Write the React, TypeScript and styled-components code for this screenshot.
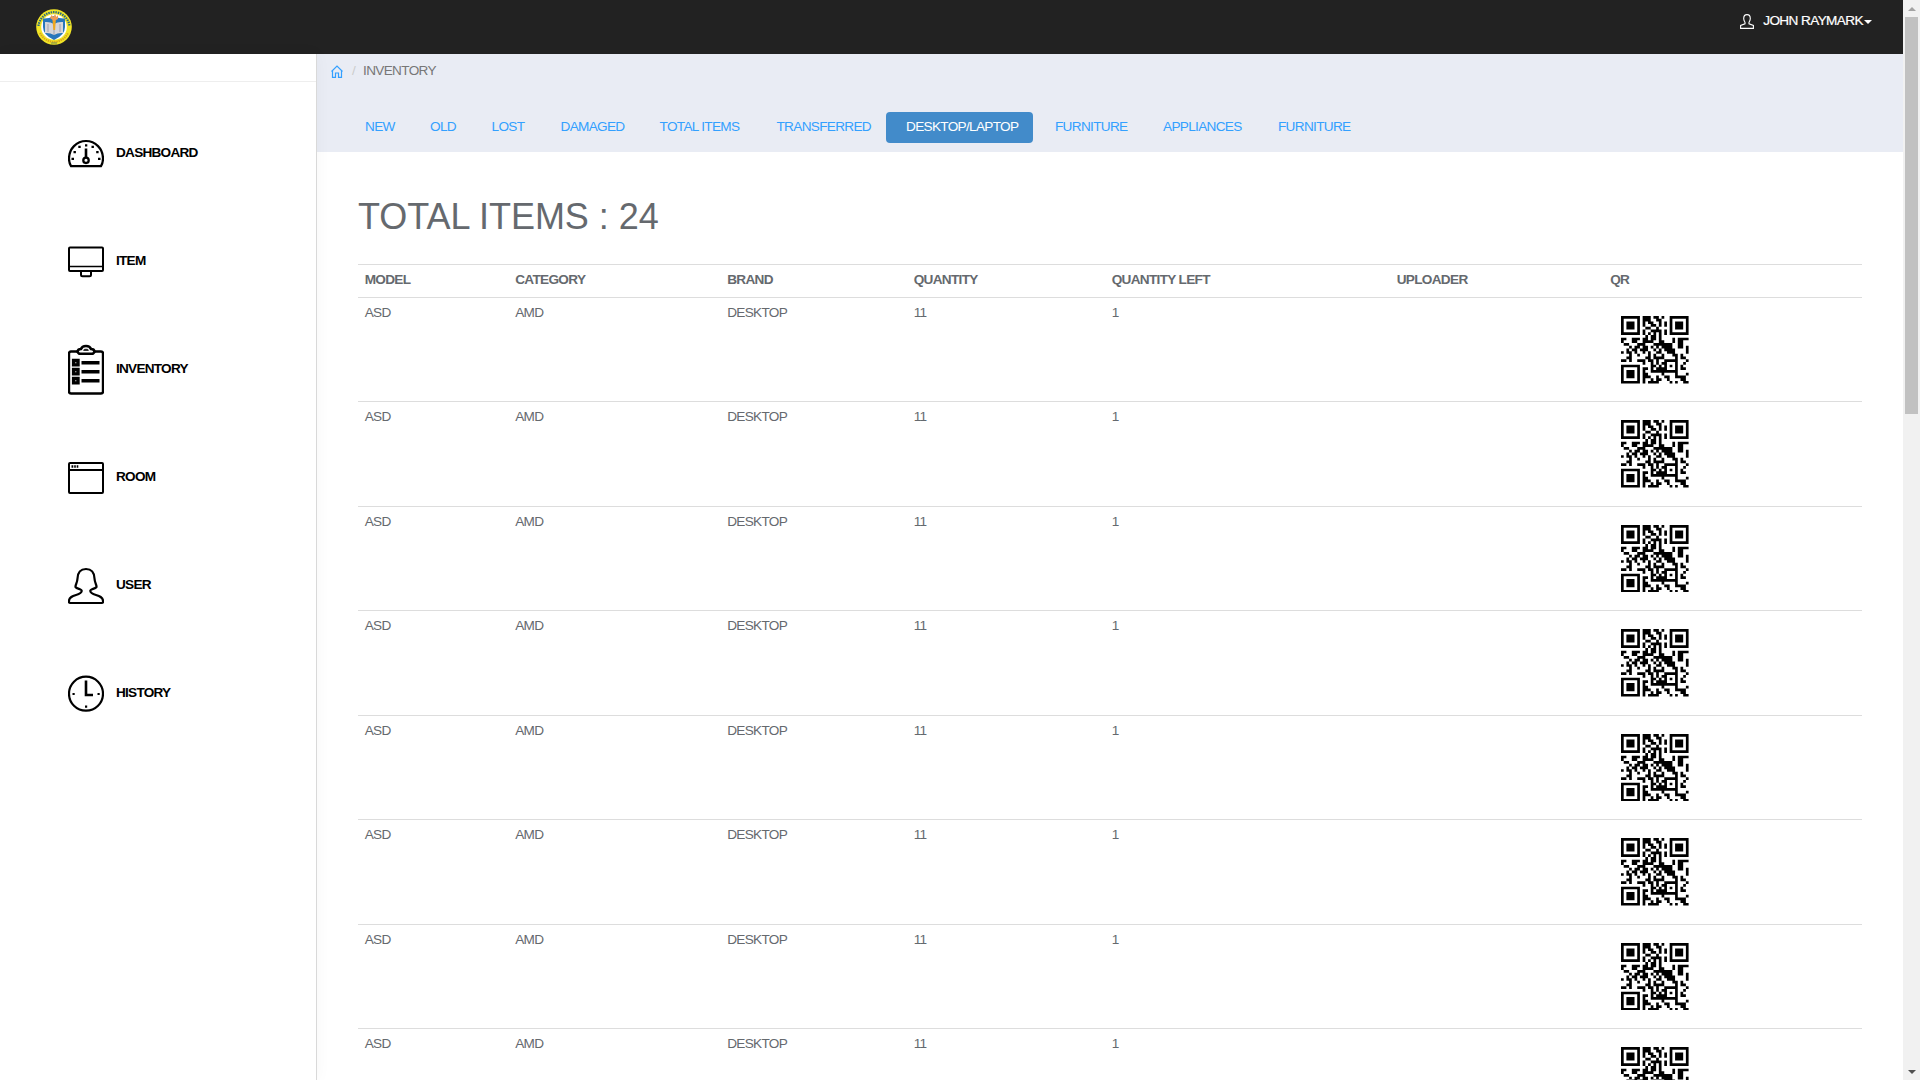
import React from "react";
import styled, { createGlobalStyle } from "styled-components";

const GlobalStyle = createGlobalStyle`
  * { box-sizing: border-box; }
  html, body { margin: 0; padding: 0; overflow: hidden; }
  body {
    font-family: "Liberation Sans", Arial, sans-serif;
    font-size: 13.6px;
    letter-spacing: -0.68px;
    line-height: 20px;
    color: #65696e;
    background: #fff;
  }
`;

const Screen = styled.div`
  display: flex;
  width: 1920px;
  height: 1080px;
  overflow: hidden;
`;
const Page = styled.div`
  display: flex;
  flex-direction: column;
  width: 1903px;
  height: 1080px;
`;
const TopBar = styled.header`
  display: flex;
  justify-content: space-between;
  align-items: flex-start;
  flex: 0 0 54px;
  background: #222;
  padding: 9px 31px 0 36px;
  color: #fff;
`;
const Account = styled.div`
  display: flex;
  align-items: center;
  padding-top: 1px;
  height: 22px;
  font-size: 13.6px;
  letter-spacing: -0.6px;
  -webkit-text-stroke: 0.2px #fff;
  svg { margin: 2px 9px 0 0; }
`;
const Caret = styled.i`
  border-left: 4px solid transparent;
  border-right: 4px solid transparent;
  border-top: 4px solid #fff;
  margin: 3px 0 0 1px;
`;
const Body = styled.div`
  display: flex;
  flex: 1;
  min-height: 0;
`;
const Sidebar = styled.aside`
  flex: 0 0 317px;
  border-right: 1px solid #d9d9d9;
  box-shadow: 0 0 15px rgba(0, 0, 0, 0.04);
  background: #fff;
  z-index: 1;
`;
const SidebarTop = styled.div`
  height: 28px;
  border-bottom: 1px solid #eee;
`;
const Menu = styled.nav`
  padding-top: 18px;
`;
const MenuItem = styled.a`
  display: flex;
  align-items: center;
  height: 108px;
  padding-left: 68px;
  color: #000;
  font-weight: bold;
  letter-spacing: -0.75px;
  svg { width: 36px; height: 52px; margin-right: 12px; }
`;
const MenuLabel = styled.span`
  padding-bottom: 2px;
`;
const Main = styled.main`
  flex: 1;
  display: flex;
  flex-direction: column;
  min-width: 0;
`;
const Strip = styled.section`
  flex: 0 0 98px;
  background: #e9ecf4;
`;
const Crumbs = styled.div`
  display: flex;
  align-items: center;
  height: 33px;
  padding-left: 14px;
  color: #777;
  svg { margin-top: 2px; }
`;
const Slash = styled.span`
  color: #ccc;
  padding: 0 8px 0 9px;
`;
const Tabs = styled.div`
  display: flex;
  padding: 25px 0 0 35px;
`;
const Tab = styled.a<{ $w: number; $active?: boolean }>`
  flex: 0 0 ${(p) => p.$w}px;
  height: 31px;
  padding-left: ${(p) => (p.$active ? 20 : 13)}px;
  line-height: 30px;
  white-space: nowrap;
  border-radius: 4px;
  color: ${(p) => (p.$active ? "#fff" : "#33a0ff")};
  background: ${(p) => (p.$active ? "#428bca" : "transparent")};
  margin-right: ${(p) => (p.$active ? 9 : 0)}px;
`;
const Content = styled.section`
  flex: 1;
  min-height: 0;
  overflow: hidden;
  padding: 45px 41px 0;
`;
const Title = styled.h1`
  margin: 0 0 27px;
  font-size: 36px;
  line-height: 40px;
  font-weight: normal;
  letter-spacing: -0.05px;
`;
const Table = styled.table`
  width: 1504px;
  border-collapse: separate;
  border-spacing: 0;
  table-layout: fixed;
`;
const Th = styled.th`
  height: 33px;
  padding: 5px 6.7px 0;
  border-top: 1px solid #ddd;
  text-align: left;
  vertical-align: top;
`;
const Td = styled.td`
  height: 104.43px;
  padding: 5px 6.7px 0;
  border-top: 1px solid #ddd;
  vertical-align: top;
`;
const Qr = styled.svg`
  display: block;
  width: 67.6px;
  height: 67.6px;
  margin: 13px 0 0 11px;
`;
const ScrollTrack = styled.div`
  display: flex;
  flex-direction: column;
  align-items: center;
  width: 17px;
  height: 1080px;
  background: #f1f1f1;
`;
const ScrollArrow = styled.div<{ $down?: boolean }>`
  display: flex;
  align-items: center;
  justify-content: center;
  height: 17px;
  margin-top: ${(p) => (p.$down ? "auto" : 0)};
  &::before {
    content: "";
    border-left: 4px solid transparent;
    border-right: 4px solid transparent;
    border-bottom: ${(p) => (p.$down ? "0" : "4px solid #a3a3a3")};
    border-top: ${(p) => (p.$down ? "4px solid #505050" : "0")};
  }
`;
const ScrollThumb = styled.div`
  width: 13px;
  height: 397px;
  background: #c1c1c1;
`;

const qrRows = [
  "1111111011101101001111111",
  "1000001011100110001000001",
  "1011101010110010101011101",
  "1011101010011010101011101",
  "1011101001100100001011101",
  "1000001010011110101000001",
  "1111111010101010101111111",
  "0000000001011010000000000",
  "1100111011011010000101111",
  "1000110011110011000101100",
  "0110001110001111111001100",
  "0001011011010101111001101",
  "0010110111001010111100001",
  "1011010010100110011100001",
  "0001001000101001000110100",
  "0011000001101111000010110",
  "1101001110110100111110001",
  "0000000010010101100010010",
  "1111111000011010101010100",
  "1000001011010111100010110",
  "1011101010011111111110000",
  "1011101011000001000010001",
  "1011101011100100110011110",
  "1000001010010110010000110",
  "1111111010111100001010011",
];
const qrPath = qrRows
  .map((row, y) => row.split("").map((c, x) => (c === "1" ? `M${x} ${y}h1v1h-1z` : "")).join(""))
  .join("");

const Line = ({ children }: { children: React.ReactNode }) => (
  <svg viewBox="0 0 36 52" fill="none" stroke="#000" strokeWidth="2" strokeLinejoin="round">
    {children}
  </svg>
);

const DashboardIcon = () => (
  <Line>
    <path d="M3 38.200Q1 35 1 30.500a17 17.500 0 0 1 34 0Q35 35 33 38.200z" strokeWidth="2.200" />
    <path d="M18 20.500v9" strokeWidth="2.600" />
    <circle cx="18" cy="32.300" r="2.700" strokeWidth="2.300" />
    <path
      d="M3.500 29.800H6v2.200H3.500zM30 29.800h2.500v2.200H30zM5.500 23h2.400v2.200H5.500zM28.200 23h2.400v2.200h-2.400zM10.300 17.800h2.400V20h-2.400zM23.500 17.800h2.400V20h-2.400zM17 16.200h2.300v2.200H17z"
      fill="#000"
      stroke="none"
    />
  </Line>
);
const MonitorIcon = () => (
  <Line>
    <rect x="1" y="11.500" width="34" height="23.500" rx="1" />
    <path d="M1 30.500h34" strokeWidth="1.600" />
    <path d="M13 35.500v3.200q0 1.500 1.500 1.500h7q1.500 0 1.500-1.500v-3.200" />
  </Line>
);
const ClipboardIcon = () => (
  <Line>
    <path d="M10 7.500H3Q1 7.500 1 9.500V47.500Q1 49.500 3 49.500H33q2 0 2-2V9.500q0-2-2-2H26" strokeWidth="2.400" />
    <path d="M9.500 8q0-3 3.500-3 1-3 5-3t5 3q3.500 0 3.500 3l-1.500 1.700H11z" strokeWidth="2.600" />
    <path d="M15.500 6.300l1-1h3l1 1z" strokeWidth="1" />
    <path d="M5.600 16.500H10v4.400H5.600zM5.600 25.500H10v4.400H5.600zM5.600 34.500H10v4.400H5.600z" strokeWidth="3.400" strokeLinejoin="miter" />
    <path d="M13.500 18.800h18M13.500 27.800h18M13.500 36.800h18" strokeWidth="3.400" />
  </Line>
);
const WindowIcon = () => (
  <Line>
    <rect x="1" y="11" width="34" height="30" rx="1" />
    <path d="M1 18h34" />
    <path d="M3.500 14.500h1.800M6.200 14.500h1.600M8.700 14.500h1.600" strokeWidth="2.400" />
  </Line>
);
const UserIcon = () => (
  <Line>
    <path
      d="M18 9C11.500 9 9.700 13.500 9.500 18.500C9.300 23 7 25.500 7.500 27C9 29 14 29 13.700 31C13.300 36 1 34 1 41V42Q1 43 2.500 43H33.500Q35 43 35 42V41C35 34 22.700 36 22.300 31C22 29 27 29 28.500 27C29 25.500 26.700 23 26.500 18.500C26.300 13.500 24.500 9 18 9Z"
      strokeWidth="2.200"
    />
  </Line>
);
const ClockIcon = () => (
  <Line>
    <circle cx="18" cy="25.700" r="17" strokeWidth="2.200" />
    <path d="M18 12.500v14.500h7" strokeWidth="2.600" strokeLinejoin="miter" />
    <path d="M4.500 26h2.200M29.500 26h2.200M17 38.600h2.200" strokeWidth="2.200" />
  </Line>
);

const Seal = () => (
  <svg width="36" height="36" viewBox="0 0 36 36">
    <circle cx="18" cy="18" r="17.800" fill="#f2e526" />
    <path d="M2.500 17A15.600 15.600 0 0 1 33.500 17" fill="none" stroke="#2c6c80" strokeWidth="2.200" strokeDasharray="1.500 .9" />
    <path d="M4 24A15.500 15.500 0 0 0 32 24" fill="none" stroke="#d9a51c" strokeWidth="2" strokeDasharray="1.400 .8" />
    <circle cx="18" cy="18" r="12.800" fill="#fff" />
    <path d="M7 9.500Q12 10 18 7q6 3 11 2.500V18q0 8-11 13Q7 26 7 18z" fill="#2877bb" />
    <path d="M9 13q5-.5 9 2 4-2.500 9-2v11q-5-.5-9 2-4-2.500-9-2z" fill="#d5d5da" />
    <path d="M18 15v11M12 15v8M24 15v8" stroke="#9298a6" strokeWidth=".8" />
    <path d="M16.500 11h3.300l-.7 10h-1.700z" fill="#f0a81d" />
    <path d="M14 9l1.500-3 2 2L19 5l1.500 3L22 6v4l-4 2z" fill="#ee9b55" />
    <path d="M15 34h6" stroke="#6c8752" />
  </svg>
);

const menu = [
  { label: "DASHBOARD", Icon: DashboardIcon },
  { label: "ITEM", Icon: MonitorIcon },
  { label: "INVENTORY", Icon: ClipboardIcon },
  { label: "ROOM", Icon: WindowIcon },
  { label: "USER", Icon: UserIcon },
  { label: "HISTORY", Icon: ClockIcon },
];
const tabs = [
  { label: "NEW", w: 65 },
  { label: "OLD", w: 61.5 },
  { label: "LOST", w: 69 },
  { label: "DAMAGED", w: 99 },
  { label: "TOTAL ITEMS", w: 117 },
  { label: "TRANSFERRED", w: 122.5 },
  { label: "DESKTOP/LAPTOP", w: 147, active: true },
  { label: "FURNITURE", w: 108 },
  { label: "APPLIANCES", w: 115 },
  { label: "FURNITURE", w: 90 },
];
const columns = [
  { label: "MODEL", w: 150.5 },
  { label: "CATEGORY", w: 212 },
  { label: "BRAND", w: 186.5 },
  { label: "QUANTITY", w: 198 },
  { label: "QUANTITY LEFT", w: 285 },
  { label: "UPLOADER", w: 213.5 },
  { label: "QR", w: 258.5 },
];
const items = Array.from({ length: 8 }, () => ["ASD", "AMD", "DESKTOP", "11", "1", ""]);

export default function App() {
  return (
    <Screen>
      <GlobalStyle />
      <Page>
        <TopBar>
          <Seal />
          <Account>
            <svg width="14" height="15" viewBox="0 0 14 15" fill="none" stroke="#fff" strokeWidth="1.100">
              <path d="M7 .6C4.500 .6 3.700 2 3.700 4.500C3.700 6.500 4.500 7.500 5 8.300V9.800L.6 11.500V14.400H13.400V11.500L9 9.800V8.300C9.500 7.500 10.300 6.500 10.300 4.500C10.300 2 9.500 .6 7 .6Z" />
            </svg>
            JOHN RAYMARK
            <Caret />
          </Account>
        </TopBar>
        <Body>
          <Sidebar>
            <SidebarTop />
            <Menu>
              {menu.map(({ label, Icon }) => (
                <MenuItem key={label}>
                  <Icon />
                  <MenuLabel>{label}</MenuLabel>
                </MenuItem>
              ))}
            </Menu>
          </Sidebar>
          <Main>
            <Strip>
              <Crumbs>
                <svg width="12" height="13" viewBox="0 0 12 13" fill="none" stroke="#33a0ff" strokeWidth="1.200">
                  <path d="M.5 6.500L6 1l5.500 5.500M1.500 6v6.400h3V8h3v4.400h3V6" />
                </svg>
                <Slash>/</Slash>
                <span>INVENTORY</span>
              </Crumbs>
              <Tabs>
                {tabs.map((t, i) => (
                  <Tab key={i} $w={t.w} $active={t.active}>
                    {t.label}
                  </Tab>
                ))}
              </Tabs>
            </Strip>
            <Content>
              <Title>TOTAL ITEMS : 24</Title>
              <Table>
                <colgroup>
                  {columns.map((c) => (
                    <col key={c.label} style={{ width: c.w }} />
                  ))}
                </colgroup>
                <thead>
                  <tr>
                    {columns.map((c) => (
                      <Th key={c.label}>{c.label}</Th>
                    ))}
                  </tr>
                </thead>
                <tbody>
                  {items.map((row, r) => (
                    <tr key={r}>
                      {row.map((cell, i) => (
                        <Td key={i}>{cell}</Td>
                      ))}
                      <Td>
                        <Qr viewBox="0 0 25 25">
                          <path d={qrPath} />
                        </Qr>
                      </Td>
                    </tr>
                  ))}
                </tbody>
              </Table>
            </Content>
          </Main>
        </Body>
      </Page>
      <ScrollTrack>
        <ScrollArrow />
        <ScrollThumb />
        <ScrollArrow $down />
      </ScrollTrack>
    </Screen>
  );
}
